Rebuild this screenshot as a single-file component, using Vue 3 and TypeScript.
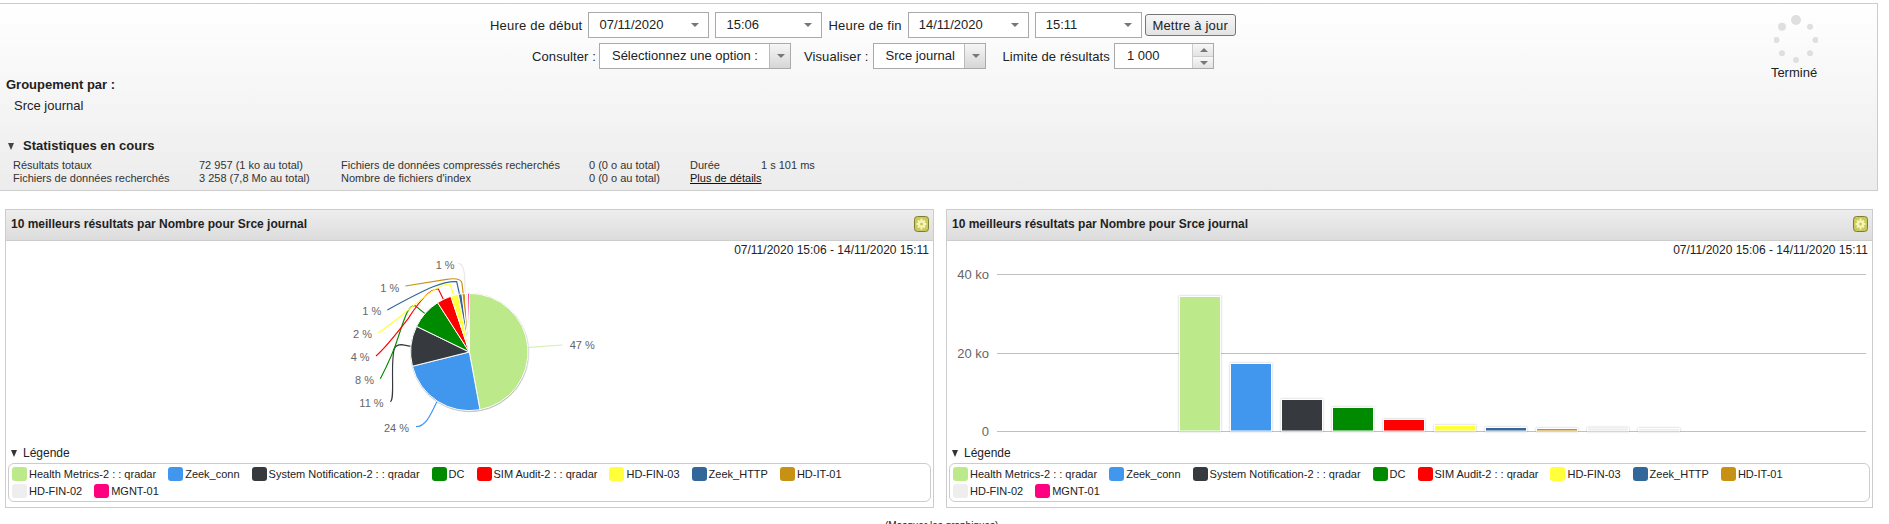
<template>
  <div class="page">
    <section class="search-panel">
      <div class="top-row">
        <div class="controls">
          <div class="row row-time">
            <span class="lbl">Heure de début</span>
            <div class="field w-date">07/11/2020<i class="caret"></i></div>
            <div class="field w-time">15:06<i class="caret"></i></div>
            <span class="lbl">Heure de fin</span>
            <div class="field w-date">14/11/2020<i class="caret"></i></div>
            <div class="field w-time">15:11<i class="caret"></i></div>
            <button class="update-btn">Mettre à jour</button>
          </div>
          <div class="row row-view">
            <span class="lbl">Consulter :</span>
            <div class="combo w-view">Sélectionnez une option :<span class="combo-arrow"><i class="caret"></i></span></div>
            <span class="lbl lbl-gap">Visualiser :</span>
            <div class="combo w-source">Srce journal<span class="combo-arrow"><i class="caret"></i></span></div>
            <span class="lbl lbl-gap2">Limite de résultats</span>
            <div class="combo w-limit">1 000
              <span class="spin">
                <span class="spin-btn"><i class="caret up"></i></span>
                <span class="spin-btn"><i class="caret"></i></span>
              </span>
            </div>
          </div>
        </div>
        <div class="status">
          <svg class="spinner" width="44" height="50" viewBox="0 0 44 50">
            <circle v-for="d in spinnerDots" :key="d.x + '-' + d.y" :cx="d.x" :cy="d.y" :r="d.r" fill="#dfdfdf" />
          </svg>
          <div class="status-text">Terminé</div>
        </div>
      </div>

      <div class="group-title">Groupement par :</div>
      <div class="group-value">Srce journal</div>

      <div class="stats-title"><i class="tri"></i>Statistiques en cours</div>
      <div class="stats">
        <span>Résultats totaux</span><span>72 957 (1 ko au total)</span>
        <span>Fichiers de données compressés recherchés</span><span>0 (0 o au total)</span>
        <span>Durée</span><span>1 s 101 ms</span>
        <span>Fichiers de données recherchés</span><span>3 258 (7,8 Mo au total)</span>
        <span>Nombre de fichiers d'index</span><span>0 (0 o au total)</span>
        <a class="more">Plus de détails</a><span></span>
      </div>
    </section>

    <div class="charts">
      <section v-for="kind in chartKinds" :key="kind" class="chart-panel">
        <header class="chart-head">
          <span>10 meilleurs résultats par Nombre pour Srce journal</span>
          <svg class="gear" width="15" height="16" viewBox="0 0 15 16">
            <rect x="0.5" y="0.5" width="14" height="15" rx="3" fill="#c9c95c" stroke="#7f7f34" />
            <g stroke="#f5f5b8" stroke-width="2">
              <line x1="7.5" y1="2.5" x2="7.5" y2="13.5" />
              <line x1="2.5" y1="8" x2="12.5" y2="8" />
              <line x1="4" y1="4.5" x2="11" y2="11.5" />
              <line x1="11" y1="4.5" x2="4" y2="11.5" />
            </g>
            <circle cx="7.5" cy="8" r="3.6" fill="#f5f5b8" />
            <circle cx="7.5" cy="8" r="1.5" fill="#c9c95c" />
          </svg>
        </header>
        <div class="range">07/11/2020 15:06 - 14/11/2020 15:11</div>

        <svg v-if="kind === 'pie'" class="plot pie" width="300" height="188" viewBox="0 24 900 564">
          <path v-for="l in leaders" :key="l.d" :d="l.d" :stroke="l.color" fill="none" stroke-width="3.5" />
          <g class="pie-slices">
            <path v-for="s in pieSlices" :key="s.name" :d="s.d" :fill="s.color" stroke="#fff" stroke-width="3" />
          </g>
          <text v-for="l in leaders" :key="l.label + l.x" :x="l.x" :y="l.y" class="pct">{{ l.label }}</text>
        </svg>

        <svg v-else class="plot" width="925" height="188" viewBox="946 258 925 188">
          <g v-for="t in ticks" :key="t.label">
            <line x1="996" x2="1865" :y1="t.y" :y2="t.y" stroke="#c0c0c0" />
            <text x="988" :y="t.y + 4.5" text-anchor="end" class="tick">{{ t.label }}</text>
          </g>
          <rect v-for="b in bars" :key="b.name" :x="b.x" :y="b.y" width="40" :height="b.h" :fill="b.color" stroke="#fff" stroke-width="2" class="bar" />
        </svg>

        <div class="legend-title"><i class="tri"></i>Légende</div>
        <div class="legend">
          <div v-for="s in series" :key="s.name" class="legend-item">
            <i class="swatch" :style="{ background: s.color }"></i>{{ s.name }}
          </div>
        </div>
      </section>
    </div>

    <div class="hide-link">(Masquer les graphiques)</div>
  </div>
</template>

<script setup lang="ts">
interface Series {
  name: string;
  color: string;
  share: number;
  barTop: number;
  barColor?: string;
}

const chartKinds = ['pie', 'bar'] as const;

const series: Series[] = [
  { name: 'Health Metrics-2 : : qradar', color: '#bcea8b', share: 47.1, barTop: 297 },
  { name: 'Zeek_conn', color: '#4197ee', share: 24, barTop: 364 },
  { name: 'System Notification-2 : : qradar', color: '#36393d', share: 11.1, barTop: 400 },
  { name: 'DC', color: '#008a00', share: 8.7, barTop: 408 },
  { name: 'SIM Audit-2 : : qradar', color: '#ff0000', share: 4, barTop: 420 },
  { name: 'HD-FIN-03', color: '#ffff3a', share: 2.1, barTop: 426 },
  { name: 'Zeek_HTTP', color: '#336699', share: 1, barTop: 428 },
  { name: 'HD-IT-01', color: '#c79213', share: 0.9, barTop: 429 },
  { name: 'HD-FIN-02', color: '#eeeeee', share: 0.6, barTop: 428.5 },
  { name: 'MGNT-01', color: '#ff0080', share: 0.5, barTop: 429, barColor: '#eeeeee' }
];

// pie, in the 3x coordinates of the svg viewBox
const CX = 418;
const CY = 306;
const R = 176;

const polar = (pct: number) => {
  const a = (pct / 100) * Math.PI * 2;
  return `${(CX + R * Math.sin(a)).toFixed(1)} ${(CY - R * Math.cos(a)).toFixed(1)}`;
};

let running = 0;
const pieSlices = series.map((s) => {
  const from = running;
  running += s.share;
  const large = s.share > 50 ? 1 : 0;
  return {
    name: s.name,
    color: s.color,
    d: `M${CX} ${CY}L${polar(from)}A${R} ${R} 0 ${large} 1 ${polar(running)}Z`
  };
});

const leaders = [
  { label: '47 %', x: 719, y: 298, color: '#d4f0b4', d: 'M597 292L698 285' },
  { label: '24 %', x: 162, y: 545, color: '#4197ee', d: 'M320 456C300 500 285 530 258 530' },
  { label: '11 %', x: 88, y: 470, color: '#36393d', d: 'M243 289L215 284C190 284 190 300 188 340C186 400 192 450 181 455' },
  { label: '8 %', x: 75, y: 401, color: '#008a00', d: 'M285 191L255 167C235 165 225 200 205 260C190 310 170 350 151 386' },
  { label: '4 %', x: 62, y: 332, color: '#ff0000', d: 'M340 148L325 117C300 115 270 150 235 205C200 250 170 290 138 318' },
  { label: '2 %', x: 69, y: 263, color: '#ffff3a', d: 'M371 135L360 103C340 100 300 125 260 160C220 190 190 220 145 248' },
  { label: '1 %', x: 97, y: 194, color: '#336699', d: 'M389 135L380 95C340 93 300 110 172 180' },
  { label: '1 %', x: 151, y: 125, color: '#c79213', d: 'M400 135L396 100C393 85 370 85 350 88L226 108' },
  { label: '1 %', x: 317, y: 56, color: '#e8e8e8', d: 'M405 130C405 80 405 42 385 40' }
];

const ticks = [
  { label: '40 ko', y: 274.5 },
  { label: '20 ko', y: 353.5 },
  { label: '0', y: 431.5 }
];

const bars = series.map((s, i) => ({
  name: s.name,
  color: s.barColor ?? s.color,
  x: 1179 + i * 51,
  y: s.barTop,
  h: 430.5 - s.barTop
}));

// 8 dots around a ring, biggest at the top then shrinking
const spinnerDots = [
  { x: 22, y: 5, r: 5 },
  { x: 36, y: 11.7, r: 3 },
  { x: 41.5, y: 25, r: 3 },
  { x: 36, y: 38.3, r: 3 },
  { x: 22, y: 45, r: 3 },
  { x: 8, y: 38.3, r: 3 },
  { x: 2.5, y: 25, r: 3 },
  { x: 8, y: 11.7, r: 4 }
];
</script>

<style scoped>
.page {
  height: 524px;
  overflow: hidden;
  padding-top: 3px;
  box-sizing: border-box;
  font-family: "Liberation Sans", Arial, sans-serif;
  color: #222;
  background: #fff;
}

.search-panel {
  width: 1878px;
  height: 188px;
  box-sizing: border-box;
  border: 1px solid #ccc;
  border-left: none;
  background: linear-gradient(#fff, #ececec);
  font-size: 13px;
}

.top-row { display: flex; height: 73px; }
.controls { padding-left: 490px; padding-top: 8px; flex: 1; }
.row { display: flex; align-items: center; }
.row-time { height: 26px; gap: 6px; }
.row-time .lbl { letter-spacing: 0.2px; }
.row-view { height: 28px; margin-top: 4px; margin-left: 42px; }
.lbl { letter-spacing: 0.1px; }
.lbl-gap { margin-left: 13px; margin-right: 4px; }
.lbl-gap2 { margin-left: 17px; margin-right: 4px; }

.field, .combo {
  position: relative;
  height: 26px;
  line-height: 24px;
  box-sizing: border-box;
  border: 1px solid #aaa;
  background: #fff;
  padding-left: 10px;
  white-space: nowrap;
}
.combo { padding-left: 12px; }
.w-date { width: 121px; }
.w-time { width: 107px; }
.w-view { width: 192px; margin-left: 3px; }
.w-source { width: 113px; }
.w-limit { width: 100px; }

.caret {
  position: absolute;
  right: 9px;
  top: 10px;
  width: 0;
  height: 0;
  border-left: 4px solid transparent;
  border-right: 4px solid transparent;
  border-top: 4px solid #777;
}
.caret.up { border-top: none; border-bottom: 4px solid #777; }

.combo-arrow {
  position: absolute;
  right: 0;
  top: 0;
  bottom: 0;
  width: 20px;
  border-left: 1px solid #bbb;
  background: linear-gradient(#f6f6f6, #d6d6d6);
}
.combo-arrow .caret { right: 5px; }

.spin {
  position: absolute;
  right: 0;
  top: 0;
  bottom: 0;
  width: 20px;
  border-left: 1px solid #ccc;
  display: flex;
  flex-direction: column;
}
.spin-btn {
  position: relative;
  flex: 1;
  background: linear-gradient(#f8f8f8, #e2e2e2);
  border-bottom: 1px solid #ccc;
}
.spin-btn:last-child { border-bottom: none; }
.spin-btn .caret { right: 5px; top: 4px; }

.update-btn {
  width: 91px;
  height: 22px;
  margin-left: -3px;
  padding: 0;
  font: 13px "Liberation Sans", Arial, sans-serif;
  letter-spacing: 0.2px;
  color: #222;
  border: 1px solid #777;
  border-radius: 3px;
  background: linear-gradient(#f6f6f6, #e3e3e3);
}

.status { width: 60px; margin-right: 51px; padding-top: 11px; text-align: center; }
.spinner { display: block; margin: 0 auto; }
.status-text { margin-right: 4px; color: #222; }

.group-title { margin: 0 0 0 6px; font-weight: bold; line-height: 16px; }
.group-value { margin: 5px 0 0 14px; line-height: 16px; }

.stats-title {
  display: flex;
  align-items: center;
  margin: 24px 0 0 8px;
  font-weight: bold;
  line-height: 16px;
}
.tri {
  display: inline-block;
  width: 0;
  height: 0;
  margin-right: 9px;
  border-left: 3.5px solid transparent;
  border-right: 3.5px solid transparent;
  border-top: 7px solid #444;
}

.stats {
  display: grid;
  grid-template-columns: 186px 142px 248px 101px 71px 100px;
  margin: 5px 0 0 13px;
  font-size: 11px;
  line-height: 13px;
  color: #333;
}
.more { color: #111; font-weight: normal; text-decoration: underline; grid-column: 5 / span 2; }

.charts {
  display: grid;
  grid-template-columns: 929px 927px;
  column-gap: 12px;
  margin: 18px 0 0 5px;
}

.chart-panel {
  height: 299px;
  box-sizing: border-box;
  border: 1px solid #ccc;
  background: #fff;
}

.chart-head {
  display: flex;
  align-items: center;
  justify-content: space-between;
  padding: 0 4px 2px 5px;
  height: 28px;
  border-bottom: 1px solid #ccc;
  background: linear-gradient(#eee, #dcdcdc);
  font-size: 12px;
  font-weight: bold;
}

.range { height: 17px; padding: 2px 4px 0 0; box-sizing: border-box; text-align: right; font-size: 12px; line-height: 15px; }

.plot { display: block; }
.pie { margin-left: 324px; }
.pie-slices { filter: drop-shadow(1px 2px 2px rgba(0, 0, 0, 0.35)); }
.pct { font: 33px "Liberation Sans", Arial, sans-serif; fill: #666; }
.tick { font: 13px "Liberation Sans", Arial, sans-serif; fill: #666; }
.bar { paint-order: stroke; filter: drop-shadow(0 0 1px rgba(0, 0, 0, 0.25)); }

.legend-title { display: flex; align-items: center; height: 16px; margin-top: -1px; margin-left: 5px; font-size: 12px; }
.legend-title .tri { border-top-color: #333; margin-right: 6px; }

.legend {
  display: flex;
  flex-wrap: wrap;
  column-gap: 12px;
  row-gap: 1px;
  height: 39px;
  box-sizing: border-box;
  margin: 2px 2px 0;
  padding: 2px 60px 0 3px;
  border: 1px solid #ccc;
  border-radius: 6px;
  align-content: flex-start;
}
.legend-item { display: flex; align-items: center; height: 16px; font-size: 11px; color: #222; white-space: nowrap; }
.swatch { width: 15px; height: 14px; margin-right: 2px; border-radius: 3px; }

.hide-link { margin-top: 12px; padding-left: 885px; font-size: 10px; line-height: 12px; }
</style>

<style>
html, body { margin: 0; background: #fff; overflow: hidden; }
</style>
